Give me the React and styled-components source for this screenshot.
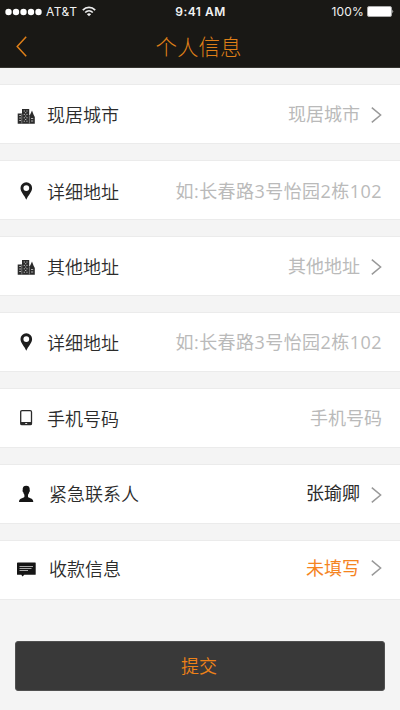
import React from 'react';
import styled, { createGlobalStyle } from 'styled-components';

const GlobalStyle = createGlobalStyle`
  * { box-sizing: border-box; }
  body { margin: 0; background: #f4f4f4; }
`;

const Screen = styled.div`
  width: 400px;
  height: 710px;
  overflow: hidden;
  display: flex;
  flex-direction: column;
  background: #f4f4f4;
  font-family: 'Noto Sans CJK SC', sans-serif;
  font-size: 18px;
`;

const Header = styled.header`
  height: 68px;
  flex: none;
  background: #191815;
  border-bottom: 1px solid #35342f;
`;

const StatusBar = styled.div`
  height: 23px;
  padding: 0 6px 0 5px;
  display: grid;
  grid-template-columns: 1fr auto 1fr;
  align-items: center;
  color: #f2f2f2;
  font-family: Inter, sans-serif;
  font-size: 12px;
  line-height: 23px;
`;

const StatusGroup = styled.div`
  display: flex;
  align-items: center;
  justify-content: ${(p) => (p.$end ? 'flex-end' : 'flex-start')};
  gap: 4px;
`;

const Carrier = styled.span`
  letter-spacing: 0.5px;
  margin-right: 1px;
`;

const Percent = styled.span`
  letter-spacing: 0.2px;
  margin-right: -1px;
`;

const Clock = styled.span`
  font-weight: 600;
  letter-spacing: 0.5px;
  margin-left: 2px;
`;

const TitleBar = styled.div`
  height: 44px;
  display: grid;
  grid-template-columns: 40px 1fr 40px;
  align-items: center;
  color: #df7f18;
`;

const BackButton = styled.button`
  border: 0;
  padding: 2px 0 0 16px;
  background: none;
  display: flex;
`;

const Title = styled.h1`
  margin: 1px 0 0 -3px;
  font-size: 21.5px;
  font-weight: 300;
  line-height: 42px;
  text-align: center;
`;

const List = styled.main`
  padding-top: 16px;
  display: grid;
  gap: 16px;
`;

const Row = styled.div`
  height: 60px;
  padding: 1px 18px 0 17px;
  display: flex;
  align-items: flex-start;
  background: #fff;
  border: solid #ebebeb;
  border-width: 1px 0;
`;

const IconSlot = styled.span`
  width: ${(p) => p.$width}px;
  height: ${(p) => 56 + 2 * p.$drop}px;
  flex: none;
  display: flex;
  align-items: center;
`;

const Label = styled.span`
  flex: 1;
  color: #2c2c2c;
  font-weight: 350;
  line-height: ${(p) => 56 + 2 * p.$drop}px;
`;

const Value = styled.span`
  color: ${(p) => p.$color};
  font-family: 'Open Sans', 'Noto Sans CJK SC', sans-serif;
  font-weight: 400;
  letter-spacing: ${(p) => p.$spacing}px;
  margin-right: ${(p) => p.$gap}px;
  line-height: ${(p) => 56 + 2 * p.$drop}px;
`;

const ArrowSlot = styled.span`
  height: ${(p) => 56 + 2 * p.$drop}px;
  display: flex;
  align-items: center;
`;

const Submit = styled.button`
  margin: 41px 15px 0 15px;
  height: 50px;
  flex: none;
  border: 1px solid #505050;
  border-radius: 3px;
  padding: 0 2px 3px 0;
  background: #393939;
  color: #ee8218;
  font-family: 'Noto Sans CJK SC', sans-serif;
  font-size: 18px;
  font-weight: 350;
  line-height: 44px;
`;

const Signal = () => (
  <svg width="37" height="8" viewBox="0 0 37 8" fill="#fff">
    {[3.5, 11, 18.5, 26, 33.5].map((x) => <circle key={x} cx={x} cy="4" r="3.200" />)}
  </svg>
);

const Wifi = () => (
  <svg width="14" height="11" viewBox="0 0 14 11" fill="none" stroke="#eee" strokeWidth="1.7">
    <path d="M.8 4.1C4.4.5 9.600.5 13.200 4.100" />
    <path d="M3.200 6.500C5.400 4.400 8.600 4.400 10.800 6.500" />
    <path d="M7 10.300 4.900 8.200Q7 6.500 9.100 8.200Z" fill="#eee" stroke="none" />
  </svg>
);

const Battery = () => (
  <svg width="27" height="11" viewBox="0 0 27 11">
    <rect x=".5" y=".5" width="24" height="10" rx="1.500" fill="#fff" stroke="#aaa" />
    <path d="M25.500 3.600q1.500 1.900 0 3.800z" fill="#fff" />
  </svg>
);

const BackIcon = () => (
  <svg width="11" height="21" viewBox="0 0 11 21" fill="none" stroke="#df7f18" strokeWidth="1.500">
    <path d="M10.200.700 1.200 10.500 10.200 20.300" />
  </svg>
);

const Arrow = () => (
  <svg width="11" height="18" viewBox="0 0 11 18" fill="none" stroke="#999" strokeWidth="1.500">
    <path d="M.8 1.700 9.600 9 .8 16.300" />
  </svg>
);

const CityIcon = () => (
  <svg width="18" height="18" viewBox="0 0 18 18" fill="#2b2b2b">
    <path d="M.7 6.500H5V2h7.200v6.800l1-1.300L15 3.500l1.500 4L17.800 10v6.800H.7z" />
    <path d="M2.200 8.500h1.800M2.200 11h1.800M2.200 13.500h1.800M6.700 4h1.300M9.300 4h1.300M8 5.700h1.300M6.700 7.400H8M9.300 7.400h1.300M8 9.100h1.300M6.700 10.800H8M9.300 10.800h1.300M8 12.500h1.300M6.700 14.200H8M9.300 14.200h1.300M14 11.500h2.200M14 14h2.200" stroke="#b0b0b0" strokeWidth="1" />
    <path d="M4.800 7v9.500M12.400 9v7.500" stroke="#aaa" strokeWidth=".6" />
  </svg>
);

const PinIcon = () => (
  <svg width="18" height="18" viewBox="0 0 18 18" fill="#1d1d1d">
    <path fillRule="evenodd" d="M9.300.2a5.800 5.800 0 0 0-5.800 5.800c0 4.200 4 7.200 5.800 11.800 1.800-4.600 5.800-7.600 5.800-11.800A5.800 5.800 0 0 0 9.300.2zm0 3a2.900 2.900 0 1 1 0 5.800 2.900 2.900 0 0 1 0-5.800z" />
  </svg>
);

const PhoneIcon = () => (
  <svg width="18" height="18" viewBox="0 0 18 18">
    <rect x="3.700" y="1.700" width="10.800" height="14" rx="1.200" fill="none" stroke="#2a2a2a" strokeWidth="1.300" />
    <path d="M4 13h10.200v2.900H4z" fill="#2a2a2a" />
    <path d="M8.200 14.500h2" stroke="#ddd" />
  </svg>
);

const PersonIcon = () => (
  <svg width="18" height="18" viewBox="0 0 18 18" fill="#151515">
    <path d="M9.200.8C6.600.8 5.400 2.300 5.700 5c-.4.600 0 2 .6 2.300.2 1.300.6 2 1.100 2.500v2.300C6 13.500 2 13.200 2 17h14.300c0-3.800-3.900-3.500-5.300-4.900V9.800c.5-.5.900-1.200 1.100-2.500.6-.3 1-1.700.6-2.300.3-2.700-.9-4.200-3.500-4.200z" />
  </svg>
);

const MessageIcon = () => (
  <svg width="19" height="18" viewBox="0 0 19 18" fill="#151515">
    <path d="M.8 2.500h17.400q.5 0 .5.500v11.300q0 .5-.5.500H7.300L5.500 16.500 4.300 14.800H.5q-.5 0-.5-.5V3.300q0-.8.8-.8z" />
    <path d="M2.500 6.500h13.500M2.500 8.500h12M2.500 10.500h8.500" stroke="#aaa" strokeWidth="1" />
  </svg>
);

const GRAY = '#bababa';

const rows = [
  { Icon: CityIcon, label: '现居城市', value: '现居城市', arrow: true, drop: 0, iconDrop: 2, arrowDrop: 1 },
  { Icon: PinIcon, label: '详细地址', value: '如:长春路3号怡园2栋102', spacing: 0.45, drop: 1, iconDrop: 1 },
  { Icon: CityIcon, label: '其他地址', value: '其他地址', arrow: true, drop: 0, iconDrop: 1, arrowDrop: 1 },
  { Icon: PinIcon, label: '详细地址', value: '如:长春路3号怡园2栋102', spacing: 0.45, drop: 0, iconDrop: 0 },
  { Icon: PhoneIcon, label: '手机号码', value: '手机号码', drop: 0, iconDrop: 0 },
  { Icon: PersonIcon, label: '紧急联系人', value: '张瑜卿', color: '#2c2c2c', arrow: true, drop: -1, iconDrop: 0, arrowDrop: 1, slot: 32 },
  { Icon: MessageIcon, label: '收款信息', value: '未填写', color: '#f5841f', arrow: true, drop: -2, iconDrop: -1, arrowDrop: -2, slot: 32 },
];

export default function App() {
  return (
    <Screen>
      <GlobalStyle />
      <Header>
        <StatusBar>
          <StatusGroup>
            <Signal />
            <Carrier>AT&amp;T</Carrier>
            <Wifi />
          </StatusGroup>
          <Clock>9:41 AM</Clock>
          <StatusGroup $end>
            <Percent>100%</Percent>
            <Battery />
          </StatusGroup>
        </StatusBar>
        <TitleBar>
          <BackButton aria-label="返回"><BackIcon /></BackButton>
          <Title>个人信息</Title>
        </TitleBar>
      </Header>
      <List>
        {rows.map(({ Icon, label, value, color = GRAY, spacing = 0, arrow, drop, iconDrop, arrowDrop, slot = 30 }, i) => (
          <Row key={i}>
            <IconSlot $width={slot} $drop={iconDrop}><Icon /></IconSlot>
            <Label $drop={drop}>{label}</Label>
            <Value $color={color} $spacing={spacing} $gap={arrow ? 11 : 0} $drop={drop}>{value}</Value>
            {arrow && <ArrowSlot $drop={arrowDrop}><Arrow /></ArrowSlot>}
          </Row>
        ))}
      </List>
      <Submit>提交</Submit>
    </Screen>
  );
}
